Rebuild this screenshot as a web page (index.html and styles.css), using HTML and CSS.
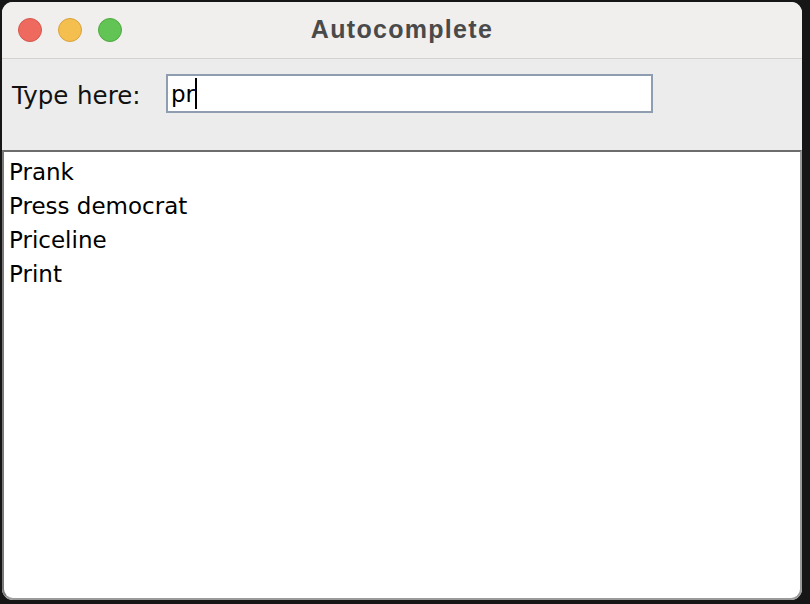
FILE: index.html
```html
<!DOCTYPE html>
<html>
<head>
<meta charset="utf-8">
<link rel="stylesheet" href="styles.css">
<title>Autocomplete</title>
</head>
<body>
<div class="window">
  <div class="titlebar">
    <div class="lights">
      <span class="light red"></span>
      <span class="light yellow"></span>
      <span class="light green"></span>
    </div>
    <div class="title">Autocomplete</div>
  </div>
  <div class="panel">
    <span class="label">Type here:</span>
    <div class="field"><span class="value">pr</span><span class="caret"></span></div>
  </div>
  <div class="list">
    <div class="item">Prank</div>
    <div class="item">Press democrat</div>
    <div class="item">Priceline</div>
    <div class="item">Print</div>
  </div>
</div>
</body>
</html>
```

FILE: styles.css
```css
html, body {
  margin: 0;
  padding: 0;
  background: #161616;
  width: 810px;
  height: 604px;
  overflow: hidden;
}
body {
  padding: 2px 0 0 2px;
  box-sizing: border-box;
  font-family: "DejaVu Sans", "Liberation Sans", sans-serif;
}
.window {
  width: 800px;
  height: 598px;
  border-radius: 11px;
  overflow: hidden;
  background: #ececec;
  display: flex;
  flex-direction: column;
}
.titlebar {
  height: 56px;
  flex: none;
  background: #f0efee;
  border-bottom: 1px solid #d2d2d2;
  display: flex;
  align-items: center;
  position: relative;
}
.lights {
  display: flex;
  gap: 16px;
  padding-left: 16px;
}
.light {
  width: 24px;
  height: 24px;
  border-radius: 50%;
  box-sizing: border-box;
  display: block;
}
.red { background: #ee6a5e; border: 1px solid #d5564a; }
.yellow { background: #f5bf4f; border: 1px solid #d9a23c; }
.green { background: #61c454; border: 1px solid #4fa93f; }
.title {
  position: absolute;
  left: 0;
  right: 0;
  top: 0;
  bottom: 0;
  display: flex;
  align-items: center;
  justify-content: center;
  font-family: "Liberation Sans", Arial, sans-serif;
  font-weight: bold;
  font-size: 25px;
  letter-spacing: 1.3px;
  color: #4a4a4a;
  padding-bottom: 2px;
  pointer-events: none;
}
.panel {
  height: 91px;
  flex: none;
  background: #ececec;
  display: flex;
  align-items: flex-start;
  padding: 15px 0 0 10px;
  box-sizing: border-box;
}
.label {
  font-size: 24.5px;
  word-spacing: 1px;
  color: #111;
  width: 154px;
  line-height: 39px;
  padding-top: 2px;
}
.field {
  width: 487px;
  height: 39px;
  box-sizing: border-box;
  background: #fff;
  border: 2px solid #8f9db0;
  display: flex;
  align-items: center;
  padding-left: 3px;
  font-size: 23px;
  color: #000;
}
.caret {
  display: block;
  width: 2px;
  height: 31px;
  background: #000;
}
.list {
  flex: 1;
  background: #fff;
  border-top: 2px solid #6c6c6c;
  border-left: 2px solid #7a7a7a;
  border-right: 2px solid #9a9a9a;
  border-bottom: 2px solid #9a9a9a;
  border-radius: 0 0 11px 11px;
  padding: 3px 0 0 5px;
}
.item {
  font-size: 23px;
  line-height: 34px;
  color: #000;
}
```
